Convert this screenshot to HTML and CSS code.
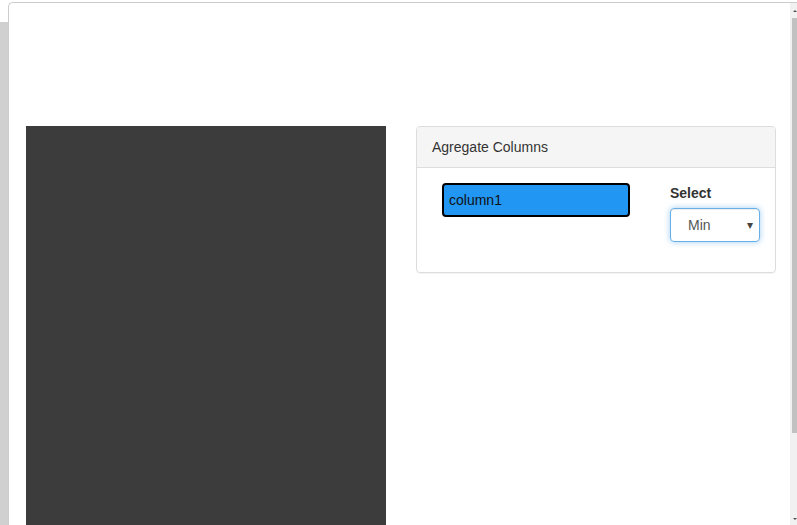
FILE: index.html
```html
<!DOCTYPE html>
<html lang="en">
<head>
	<meta charset="UTF-8">
	<title>Agregate Columns</title>
	<link rel="stylesheet" href="styles.css">
</head>
<body>
	<div class="behind"></div>
	<div class="modal">
		<div class="modal-body">
			<div class="preview"></div>
			<div class="card">
				<div class="card-head">Agregate Columns</div>
				<div class="card-body">
					<div class="col-name">
						<input class="col-input" type="text" value="column1">
					</div>
					<div class="col-select">
						<label class="sel-label">Select</label>
						<div class="sel-box">
							<span class="sel-value">Min</span>
							<span class="sel-arrow">&#9662;</span>
						</div>
					</div>
				</div>
			</div>
		</div>
		<div class="scrollbar">
			<span class="sb-up"></span>
			<div class="sb-thumb"></div>
			<span class="sb-down"></span>
		</div>
	</div>
</body>
</html>
```

FILE: styles.css
```css
body {
	margin: 0px;
	background: #fff;
	height: 525px;
	overflow: hidden;
	font-family: "Liberation Sans", Arial, sans-serif;
	font-size: 14px;
	color: #333;
}
.behind {
	position: absolute;
	left: 0px;
	top: 22px;
	bottom: 0px;
	width: 8px;
	background: #d0d0d0;
}
.modal {
	position: relative;
	margin: 2px 0px 0px 8px;
	height: 523px;
	border-top: 1px solid #ccc;
	border-left: 1px solid #ccc;
	border-top-left-radius: 5px;
	background: #fff;
	display: flex;
}
.modal-body {
	flex: 1;
	display: flex;
	align-items: flex-start;
	gap: 30px;
	padding: 123px 0px 0px 17px;
}
.preview {
	width: 360px;
	height: 420px;
	background: #3c3c3c;
}
.card {
	width: 358px;
	border: 1px solid #ddd;
	border-radius: 4px;
	box-shadow: 0 1px 1px rgba(0,0,0,0.05);
}
.card-head {
	background: #f5f5f5;
	border-bottom: 1px solid #ddd;
	border-radius: 3px 3px 0px 0px;
	padding: 10px 15px;
	line-height: 20px;
}
.card-body {
	display: flex;
	justify-content: space-between;
	padding: 15px 15px 30px 25px;
}
.col-input {
	box-sizing: border-box;
	width: 188px;
	height: 34px;
	margin: 0px;
	padding: 0px 5px;
	background: #2196f3;
	border: 2px solid #000;
	border-radius: 4px;
	font: 14px "Liberation Sans", Arial, sans-serif;
	color: #111;
	outline: none;
}
.col-select {
	width: 90px;
}
.sel-label {
	display: block;
	font-weight: bold;
	line-height: 20px;
	margin-bottom: 5px;
}
.sel-box {
	box-sizing: border-box;
	height: 34px;
	border: 1px solid #66afe9;
	border-radius: 4px;
	box-shadow: inset 0 1px 1px rgba(0,0,0,0.075), 0 0 6px rgba(102,175,233,0.6);
	display: flex;
	align-items: center;
	justify-content: space-between;
	padding: 0px 6px 0px 17px;
	color: #555;
}
.sel-arrow {
	font-size: 12px;
	color: #444;
}
.scrollbar {
	position: relative;
	width: 7px;
	background: #f1f1f1;
}
.sb-thumb {
	position: absolute;
	left: 2px;
	right: 0px;
	top: 15px;
	height: 415px;
	background: #c1c1c1;
}
.sb-up, .sb-down {
	position: absolute;
	left: 3px;
	width: 0px;
	height: 0px;
	border-left: 2px solid transparent;
	border-right: 2px solid transparent;
}
.sb-up {
	top: 7px;
	border-bottom: 2px solid #505050;
}
.sb-down {
	top: 515px;
	border-top: 2px solid #505050;
}
```
